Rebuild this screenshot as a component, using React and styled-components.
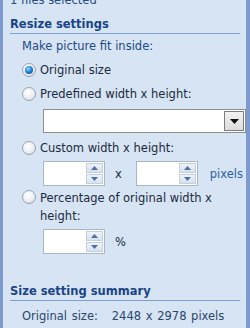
import React from "react";
import styled, { createGlobalStyle } from "styled-components";

const Global = createGlobalStyle`
  html, body { margin: 0; padding: 0; }
  body { width: 250px; height: 328px; overflow: hidden; background: #d6e4f3; }
`;

const Panel = styled.div`
  box-sizing: border-box;
  width: 250px;
  height: 328px;
  overflow: hidden;
  background: #d6e4f3;
  border-left: 3px solid #7d9bcf;
  border-right: 4px solid #7d9bcf;
  font-family: "DejaVu Sans", Verdana, sans-serif;
  font-size: 11.5px;
  color: #1c2a40;
  padding: 0 0 0 7px;
`;

const Selected = styled.div`
  margin-top: -7px;
  height: 14px;
  color: #254a86;
`;

const Heading = styled.div`
  font-weight: bold;
  font-size: 11.5px;
  line-height: 14px;
  color: #1a4486;
  border-bottom: 1px solid #7fa0d4;
  padding: 0 0 2px;
  margin: ${(p) => p.$top}px 6px 0 0;
`;

const Body = styled.div`
  padding-left: 12px;
`;

const Hint = styled.div`
  color: #1f4a86;
  margin-top: 4px;
  line-height: 16px;
`;

const Option = styled.label`
  display: flex;
  align-items: flex-start;
  gap: 4px;
  margin-top: ${(p) => p.$top || 8}px;
  line-height: ${(p) => p.$lh || 16}px;
`;

const OptionText = styled.span`
  max-width: ${(p) => p.$max || 200}px;
`;

const Radio = styled.span`
  flex: none;
  box-sizing: border-box;
  width: 14px;
  height: 14px;
  margin-top: 1px;
  border-radius: 50%;
  border: 1px solid #98a3b0;
  background: radial-gradient(circle at 40% 35%, #ffffff 0%, #eceff2 55%, #c7ced6 100%);
  position: relative;
  &::after {
    content: "";
    display: ${(p) => (p.$on ? "block" : "none")};
    position: absolute;
    left: 2px;
    top: 2px;
    width: 8px;
    height: 8px;
    border-radius: 50%;
    background: radial-gradient(circle at 40% 35%, #9ad6ff 0%, #1a80d2 50%, #0a3d78 100%);
  }
`;

const Indent = styled.div`
  padding-left: 21px;
  margin-top: ${(p) => p.$top || 6}px;
  display: flex;
  align-items: center;
`;

const Combo = styled.div`
  box-sizing: border-box;
  width: 203px;
  height: 24px;
  background: #fff;
  border: 1px solid #8a8f96;
  display: flex;
  justify-content: flex-end;
  padding: 1px;
`;

const ComboBtn = styled.div`
  box-sizing: border-box;
  width: 20px;
  height: 20px;
  border: 1px solid #7b7f85;
  background: linear-gradient(#f2f2f2, #dcdcdc);
  display: flex;
  align-items: center;
  justify-content: center;
`;

const Spin = styled.div`
  box-sizing: border-box;
  width: 62px;
  height: 25px;
  background: #fff;
  border: 1px solid #a9b6c6;
  display: flex;
  justify-content: flex-end;
`;

const SpinBtns = styled.div`
  width: 17px;
  display: flex;
  flex-direction: column;
  gap: 1px;
  padding: 1px;
`;

const SpinBtn = styled.div`
  flex: 1;
  background: linear-gradient(#eef3f9, #d7e2ef);
  border: 1px solid #c3cfdd;
  display: flex;
  align-items: center;
  justify-content: center;
`;

const Unit = styled.span`
  margin-left: ${(p) => p.$gap || 10}px;
  color: ${(p) => (p.$blue ? "#2b5ea8" : "#1c2a40")};
  display: flex;
`;

const Summary = styled.div`
  margin-top: 8px;
  padding-left: 12px;
  color: #2a4670;
  word-spacing: 1px;
`;

function Tri({ up, color = "#4d6ea6" }) {
  return (
    <svg width="7" height="4" viewBox="0 0 7 4">
      <polygon points={up ? "0,4 7,4 3.5,0" : "0,0 7,0 3.5,4"} fill={color} />
    </svg>
  );
}

function Spinner() {
  return (
    <Spin>
      <SpinBtns>
        <SpinBtn><Tri up /></SpinBtn>
        <SpinBtn><Tri /></SpinBtn>
      </SpinBtns>
    </Spin>
  );
}

export default function App() {
  return (
    <Panel>
      <Global />
      <Selected>1 files selected</Selected>
      <Heading $top={10}>Resize settings</Heading>
      <Body>
        <Hint>Make picture fit inside:</Hint>
        <Option $top={8}><Radio $on /><OptionText>Original size</OptionText></Option>
        <Option $top={8}><Radio /><OptionText>Predefined width x height:</OptionText></Option>
        <Indent $top={7}>
          <Combo>
            <ComboBtn>
              <svg width="9" height="5" viewBox="0 0 9 5"><polygon points="0,0 9,0 4.5,5" fill="#111" /></svg>
            </ComboBtn>
          </Combo>
        </Indent>
        <Option $top={7}><Radio /><OptionText>Custom width x height:</OptionText></Option>
        <Indent $top={5}>
          <Spinner />
          <Unit>x</Unit>
          <Unit $gap={14}><Spinner /></Unit>
          <Unit $blue $gap={12}>pixels</Unit>
        </Indent>
        <Option $top={3} $lh={18}><Radio /><OptionText $max={175}>Percentage of original width x height:</OptionText></Option>
        <Indent $top={4}>
          <Spinner />
          <Unit>%</Unit>
        </Indent>
      </Body>
      <Heading $top={30}>Size setting summary</Heading>
      <Summary>Original size:&nbsp;&nbsp; 2448 x 2978 pixels</Summary>
    </Panel>
  );
}
